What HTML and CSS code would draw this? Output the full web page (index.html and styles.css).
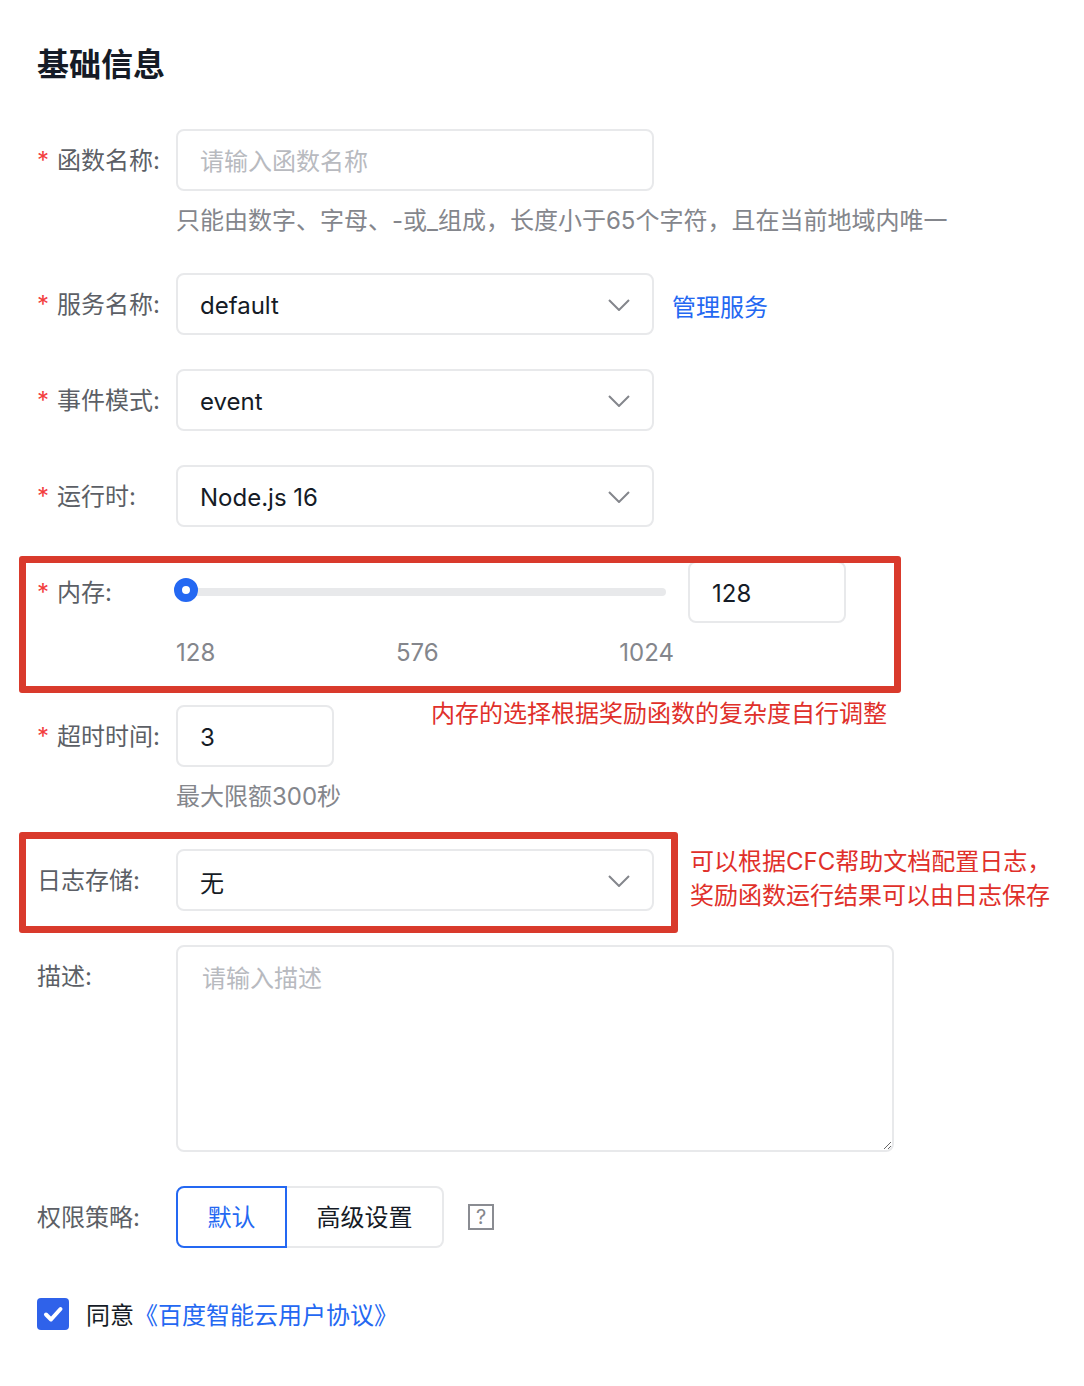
FILE: index.html
```html
<!DOCTYPE html>
<html lang="zh-CN">
<head>
  <meta charset="UTF-8">
  <meta name="viewport" content="width=device-width, initial-scale=1.0">
  <title>基础信息</title>
  <link rel="stylesheet" href="styles.css">
</head>
<body>
  <div class="page">
    <h2 class="title">基础信息</h2>

    <div class="form-item">
      <label class="label"><span class="req">*</span>函数名称:</label>
      <div class="control">
        <input class="input wide" type="text" placeholder="请输入函数名称">
        <div class="hint">只能由数字、字母、-或_组成，长度小于65个字符，且在当前地域内唯一</div>
      </div>
    </div>

    <div class="form-item">
      <label class="label"><span class="req">*</span>服务名称:</label>
      <div class="control row">
        <div class="select">
          <span>default</span>
          <svg class="arrow" width="22" height="12" viewBox="0 0 22 12"><path d="M1 1 L11 11 L21 1" /></svg>
        </div>
        <a class="link manage" href="#">管理服务</a>
      </div>
    </div>

    <div class="form-item">
      <label class="label"><span class="req">*</span>事件模式:</label>
      <div class="control">
        <div class="select">
          <span>event</span>
          <svg class="arrow" width="22" height="12" viewBox="0 0 22 12"><path d="M1 1 L11 11 L21 1" /></svg>
        </div>
      </div>
    </div>

    <div class="form-item">
      <label class="label"><span class="req">*</span>运行时:</label>
      <div class="control">
        <div class="select">
          <span>Node.js 16</span>
          <svg class="arrow" width="22" height="12" viewBox="0 0 22 12"><path d="M1 1 L11 11 L21 1" /></svg>
        </div>
      </div>
    </div>

    <!-- memory, with the red note box drawn over it -->
    <div class="form-item marked">
      <label class="label"><span class="req">*</span>内存:</label>
      <div class="control">
        <div class="row">
          <div class="slider">
            <div class="track"></div>
            <div class="thumb"></div>
          </div>
          <input class="input num" type="text" value="128">
        </div>
        <div class="ticks">
          <span>128</span>
          <span>576</span>
          <span>1024</span>
        </div>
      </div>
      <div class="mark mark-mem"></div>
      <div class="note note-mem">内存的选择根据奖励函数的复杂度自行调整</div>
    </div>

    <div class="form-item">
      <label class="label"><span class="req">*</span>超时时间:</label>
      <div class="control">
        <input class="input num" type="text" value="3">
        <div class="hint">最大限额300秒</div>
      </div>
    </div>

    <div class="form-item marked">
      <label class="label">日志存储:</label>
      <div class="control">
        <div class="select">
          <span>无</span>
          <svg class="arrow" width="22" height="12" viewBox="0 0 22 12"><path d="M1 1 L11 11 L21 1" /></svg>
        </div>
      </div>
      <div class="mark mark-log"></div>
      <div class="note note-log">可以根据CFC帮助文档配置日志，<br>奖励函数运行结果可以由日志保存</div>
    </div>

    <div class="form-item">
      <label class="label">描述:</label>
      <div class="control">
        <textarea class="textarea" placeholder="请输入描述"></textarea>
      </div>
    </div>

    <div class="form-item">
      <label class="label">权限策略:</label>
      <div class="control row">
        <div class="radio-group">
          <span class="radio active">默认</span>
          <span class="radio">高级设置</span>
        </div>
        <span class="help">?</span>
      </div>
    </div>

    <div class="agree">
      <span class="checkbox">
        <svg width="32" height="32" viewBox="0 0 32 32"><path d="M9 16.5 L14 21.5 L23.5 11" /></svg>
      </span>
      <span class="agree-text">同意</span>
      <a class="link" href="#">《百度智能云用户协议》</a>
    </div>
  </div>
</body>
</html>
```

FILE: styles.css
```css
/* base */
body {
  margin: 0;
  background: #fff;
  font-family: Inter, "Noto Sans CJK SC", sans-serif;
  font-size: 24px;
  color: #151b26;
}
.page {
  padding: 43px 0 40px 37px;
}
.title {
  margin: 0 0 42px;
  font-size: 32px;
  line-height: 44px;
  font-weight: 700;
  color: #151b26;
}

/* form rows */
.form-item {
  display: flex;
  margin-bottom: 34px;
}
.form-item.marked {
  position: relative;
}
.label {
  flex: 0 0 139px;
  line-height: 64px;
  height: 62px;
  color: #5c5f66;
  white-space: nowrap;
}
.req {
  color: #f33e3e;
  margin-right: 8px;
}
.control {
  display: flex;
  flex-direction: column;
}
.row {
  display: flex;
  flex-direction: row;
  align-items: center;
}
.hint {
  margin-top: 12px;
  line-height: 36px;
  color: #84868c;
}

/* inputs */
.input {
  box-sizing: border-box;
  height: 62px;
  padding: 2px 22px 0;
  border: 2px solid #e8e9eb;
  border-radius: 8px;
  font: inherit;
  color: #151b26;
  outline: none;
}
.input::placeholder,
.textarea::placeholder {
  color: #b8babf;
}
.input.wide {
  width: 478px;
}
.input.num {
  width: 158px;
}
.select {
  box-sizing: border-box;
  width: 478px;
  height: 62px;
  padding: 2px 22px 0;
  border: 2px solid #e8e9eb;
  border-radius: 8px;
  display: flex;
  align-items: center;
  justify-content: space-between;
}
.arrow path {
  fill: none;
  stroke: #84868c;
  stroke-width: 2;
}
.link {
  color: #2468f2;
  text-decoration: none;
}
.manage {
  margin-left: 18px;
  padding-top: 2px;
}

/* memory slider */
.slider {
  position: relative;
  width: 490px;
  height: 62px;
  margin-right: 22px;
  display: flex;
  align-items: center;
}
.track {
  width: 100%;
  height: 8px;
  border-radius: 4px;
  background: #e8e9eb;
}
.thumb {
  position: absolute;
  left: -2px;
  top: 17px;
  box-sizing: border-box;
  width: 24px;
  height: 24px;
  border-radius: 50%;
  border: 8px solid #2468f2;
  background: #fff;
}
.ticks {
  width: 498px;
  margin-top: 12px;
  line-height: 36px;
  display: flex;
  justify-content: space-between;
  color: #84868c;
}

/* red notes */
.mark {
  position: absolute;
  left: -18px;
  box-sizing: border-box;
  border: 7px solid #d93a2c;
  border-radius: 3px;
  pointer-events: none;
}
.mark-mem {
  top: -5px;
  width: 882px;
  height: 137px;
}
.mark-log {
  top: -17px;
  width: 659px;
  height: 101px;
}
.note {
  position: absolute;
  color: #e0302a;
  line-height: 34px;
  white-space: nowrap;
}
.note-mem {
  left: 394px;
  top: 136px;
}
.note-log {
  left: 653px;
  top: -4px;
}

/* textarea */
.textarea {
  box-sizing: border-box;
  width: 718px;
  height: 207px;
  padding: 15px 24px;
  border: 2px solid #e8e9eb;
  border-radius: 8px;
  font: inherit;
  line-height: 34px;
  outline: none;
}

/* radio buttons */
.radio-group {
  display: flex;
}
.radio {
  box-sizing: border-box;
  height: 62px;
  line-height: 60px;
  text-align: center;
  border: 2px solid #e8e9eb;
  color: #151b26;
}
.radio:first-child {
  width: 111px;
  border-radius: 8px 0 0 8px;
}
.radio:last-child {
  width: 157px;
  border-left: none;
  border-radius: 0 8px 8px 0;
}
.radio.active {
  border-color: #2468f2;
  color: #2468f2;
}
.help {
  box-sizing: border-box;
  width: 26px;
  height: 26px;
  margin-left: 24px;
  border: 2px solid #8a8c92;
  color: #84868c;
  font-size: 20px;
  line-height: 22px;
  text-align: center;
}

/* agreement */
.agree {
  display: flex;
  align-items: center;
  margin-top: 48px;
}
.checkbox {
  width: 32px;
  height: 32px;
  border-radius: 4px;
  background: #2f62ea;
}
.checkbox path {
  fill: none;
  stroke: #fff;
  stroke-width: 4;
  stroke-linecap: round;
  stroke-linejoin: round;
}
.agree-text {
  margin-left: 17px;
}
```
